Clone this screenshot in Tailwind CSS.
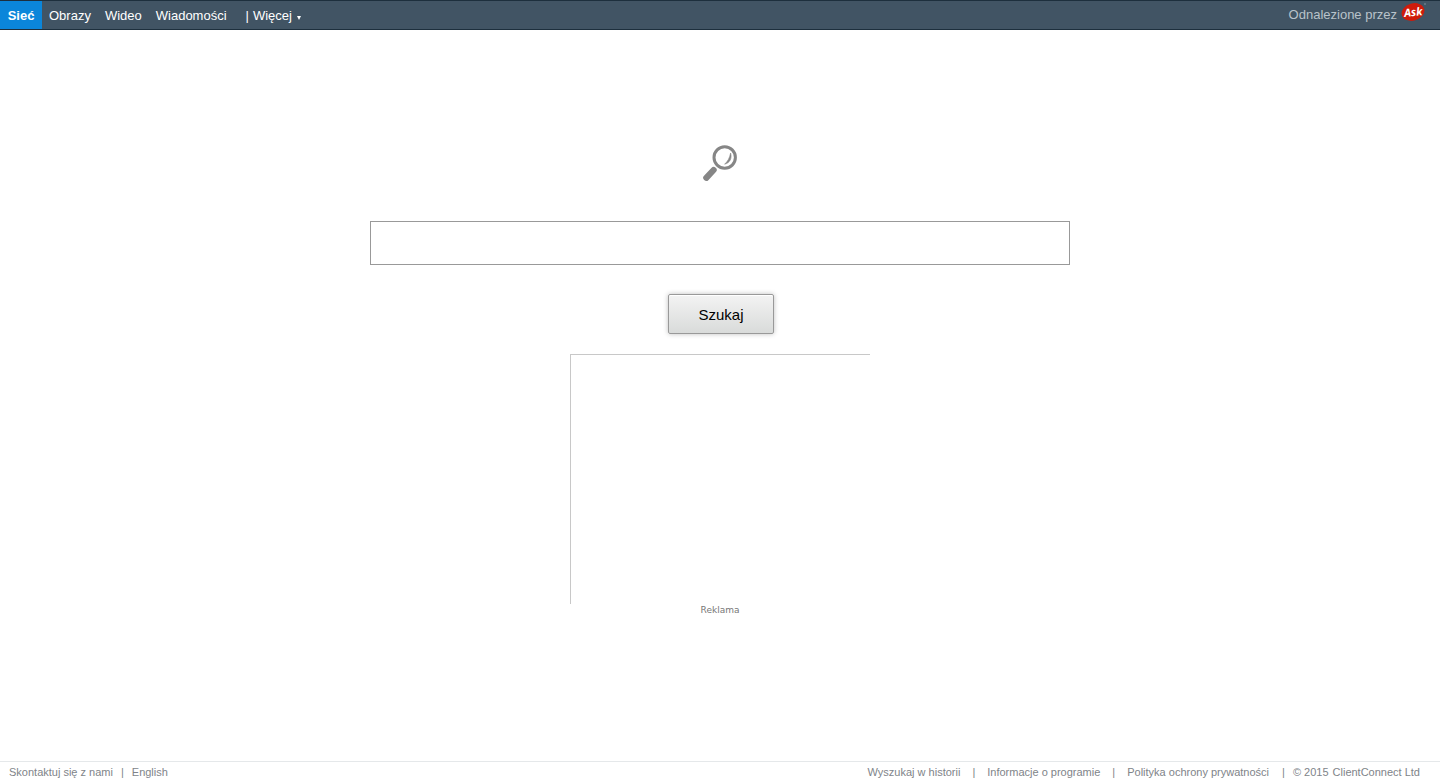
<!DOCTYPE html>
<html lang="pl">
<head>
    <meta charset="UTF-8">
    <meta name="viewport" content="width=device-width, initial-scale=1.0">
    <title>Szukaj</title>
    <script src="https://cdn.jsdelivr.net/npm/@tailwindcss/browser@4"></script>
</head>
<body class="min-h-screen flex flex-col bg-white font-['Liberation_Sans',Arial,sans-serif]">

    <!-- Top Bar -->
    <header class="h-[30px] flex justify-between bg-[#415464] border-y border-[#1d2f3d] text-[13px] leading-7 text-white">
        <nav class="flex leading-[30px]">
            <a href="#" class="w-[42px] text-center bg-[#0b86da] font-bold">Sieć</a>
            <a href="#" class="px-[7px]">Obrazy</a>
            <a href="#" class="px-[7px]">Wideo</a>
            <a href="#" class="px-[7px]">Wiadomości</a>
            <span class="pl-3">|</span>
            <button type="button" class="flex items-center gap-[5px] pl-1 h-[30px]">
                Więcej
                <svg class="w-1 h-1 mt-1" viewBox="0 0 4 4" fill="currentColor"><path d="M0 0h4L2 4z"/></svg>
            </button>
        </nav>
        <div class="flex pr-[14px] gap-1 text-[#b9c3ca]">
            <span>Odnalezione przez</span>
            <svg class="w-[25px] h-[21px]" viewBox="0 0 25 21" role="img" aria-label="Ask">
                <ellipse cx="12" cy="11" rx="11.6" ry="8.6" fill="#cf1b0b" transform="rotate(-16 12 11)"/>
                <circle cx="24" cy="3" r="0.8" fill="#8796a1"/>
                <text x="3" y="15" font-weight="bold" font-style="italic" font-family="Open Sans, sans-serif" fill="#fff" transform="rotate(-6 12 11)" class="text-[11px]">Ask</text>
            </svg>
        </div>
    </header>

    <!-- Search -->
    <main class="flex-1 flex flex-col items-center pt-[114px]">
        <svg class="w-9 h-[38px]" viewBox="0 0 36 38" fill="none">
            <circle cx="22.7" cy="13.5" r="10.7" stroke="#868686" stroke-width="3"/>
            <path d="M28.6 9c1.6 5.4-.8 10-6 11.2 3.2-2.8 5-6.2 6-11.2z" fill="#868686" stroke="#868686" stroke-width="0.6"/>
            <path d="M4.3 33.8L11.6 26" stroke="#868686" stroke-width="6.2" stroke-linecap="round"/>
        </svg>
        <form class="w-full flex flex-col items-center px-4 pt-[39px]">
            <input type="text" aria-label="Szukaj" class="w-full max-w-[700px] h-11 border border-[#999] px-3 text-lg outline-none">
            <button type="submit" class="w-[106px] h-10 pt-0.5 mt-[29px] ml-0.5 rounded-xs border border-[#999] bg-linear-to-b from-[#f3f3f3] to-[#d9dbda] text-[15px] text-black shadow-[0_0_5px_rgba(0,0,0,0.25),inset_0_1px_0_#fff]">Szukaj</button>
        </form>
        <!-- Ad slot -->
        <div class="w-[300px] h-[250px] mt-5 border-t border-l border-[#c8c8c8]"></div>
        <p class="text-[9px] leading-3 text-[#777] font-['DejaVu_Sans',sans-serif]">Reklama</p>
    </main>

    <!-- Footer -->
    <footer class="h-[22px] flex justify-between border-t border-[#e5e8ea] pl-[9px] pr-5 text-[11px] leading-5 text-[#808489]">
        <div class="flex gap-2">
            <a href="#">Skontaktuj się z nami</a>
            <span>|</span>
            <a href="#">English</a>
        </div>
        <div class="flex">
            <a href="#">Wyszukaj w historii</a>
            <span class="px-3">|</span>
            <a href="#">Informacje o programie</a>
            <span class="px-3">|</span>
            <a href="#">Polityka ochrony prywatności</a>
            <span class="pl-[13px] pr-2">|</span>
            <span class="pr-1">© 2015</span>
            <span>ClientConnect Ltd</span>
        </div>
    </footer>

</body>
</html>
